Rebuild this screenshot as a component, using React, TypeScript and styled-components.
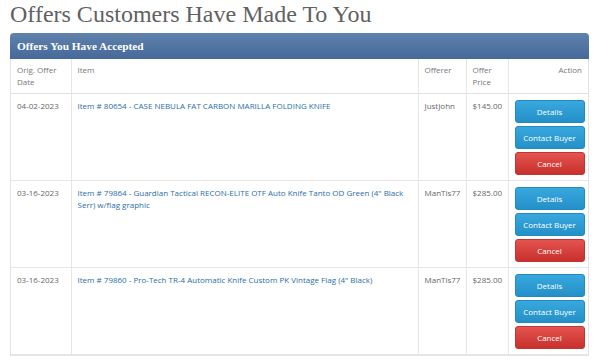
import React from "react";
import styled, { createGlobalStyle } from "styled-components";

const Global = createGlobalStyle`
  html, body { margin: 0; padding: 0; background: #fff; }
  body { font-family: "Open Sans", "DejaVu Sans", sans-serif; }
`;

const Page = styled.div`
  padding: 1px 11px 0 10px;
  width: 600px;
  box-sizing: border-box;
`;

const Title = styled.h1`
  margin: 0 0 6px 0;
  font-family: "Liberation Serif", "DejaVu Serif", serif;
  font-weight: normal;
  font-size: 24px;
  line-height: 26px;
  color: #616161;
`;

const Panel = styled.div`
  border: 1px solid #e3e3e3;
  border-top: none;
  border-radius: 4px 4px 0 0;
`;

const PanelHeader = styled.div`
  height: 26px;
  box-sizing: border-box;
  padding: 0 7px;
  display: flex;
  align-items: center;
  background: linear-gradient(#5e82ab, #46699a);
  border-radius: 4px 4px 0 0;
  margin: 0 -1px;
  color: #fff;
  font-family: "Liberation Serif", "DejaVu Serif", serif;
  font-weight: bold;
  font-size: 11.3px;
`;

const Table = styled.table`
  width: 100%;
  border-collapse: collapse;
  table-layout: fixed;
  font-size: 8px;
  line-height: 11.5px;
  color: #666;
`;

const Col = styled.col<{ $w: number }>`
  width: ${(p) => p.$w}px;
`;

const Th = styled.th<{ $right?: boolean }>`
  text-align: ${(p) => (p.$right ? "right" : "left")};
  font-weight: normal;
  vertical-align: top;
  padding: 5px 6px 6px 6px;
  height: 23px;
  border-left: 1px solid #e6e6e6;
  border-bottom: 1px solid #e0e0e0;
  color: #777;
  &:first-child { border-left: none; }
`;

const Td = styled.td`
  vertical-align: top;
  padding: 6px 6px 5px 6px;
  border-left: 1px solid #e6e6e6;
  border-bottom: 1px solid #e6e6e6;
  &:first-child { border-left: none; }
`;

const Link = styled.a`
  color: #2b6ea6;
  text-decoration: none;
`;

const Actions = styled.div`
  display: flex;
  flex-direction: column;
  gap: 3px;
`;

const Btn = styled.button<{ $variant: "info" | "danger" }>`
  width: 70px;
  height: 23px;
  border-radius: 3px;
  border: 1px solid ${(p) => (p.$variant === "info" ? "#1f8bc0" : "#c23631")};
  background: ${(p) =>
    p.$variant === "info"
      ? "linear-gradient(#38a8df, #2490c8)"
      : "linear-gradient(#e45450, #c8302c)"};
  color: #fff;
  font-family: "Open Sans", sans-serif;
  font-size: 8px;
  padding: 0;
  cursor: pointer;
`;

const rows = [
  {
    date: "04-02-2023",
    item: "Item # 80654 - CASE NEBULA FAT CARBON MARILLA FOLDING KNIFE",
    offerer: "JustJohn",
    price: "$145.00",
  },
  {
    date: "03-16-2023",
    item: "Item # 79864 - Guardian Tactical RECON-ELITE OTF Auto Knife Tanto OD Green (4\" Black Serr) w/flag graphic",
    offerer: "ManTis77",
    price: "$285.00",
  },
  {
    date: "03-16-2023",
    item: "Item # 79860 - Pro-Tech TR-4 Automatic Knife Custom PK Vintage Flag (4\" Black)",
    offerer: "ManTis77",
    price: "$285.00",
  },
];

export default function App() {
  return (
    <Page>
      <Global />
      <Title>Offers Customers Have Made To You</Title>
      <Panel>
        <PanelHeader>Offers You Have Accepted</PanelHeader>
        <Table>
          <colgroup>
            <Col $w={60} />
            <Col $w={347} />
            <Col $w={48} />
            <Col $w={42} />
            <Col $w={80} />
          </colgroup>
          <thead>
            <tr>
              <Th>Orig. Offer Date</Th>
              <Th>Item</Th>
              <Th>Offerer</Th>
              <Th>Offer Price</Th>
              <Th $right>Action</Th>
            </tr>
          </thead>
          <tbody>
            {rows.map((r, i) => (
              <tr key={i}>
                <Td>{r.date}</Td>
                <Td>
                  <Link href="#">{r.item}</Link>
                </Td>
                <Td>{r.offerer}</Td>
                <Td>{r.price}</Td>
                <Td>
                  <Actions>
                    <Btn $variant="info">Details</Btn>
                    <Btn $variant="info">Contact Buyer</Btn>
                    <Btn $variant="danger">Cancel</Btn>
                  </Actions>
                </Td>
              </tr>
            ))}
          </tbody>
        </Table>
      </Panel>
    </Page>
  );
}
